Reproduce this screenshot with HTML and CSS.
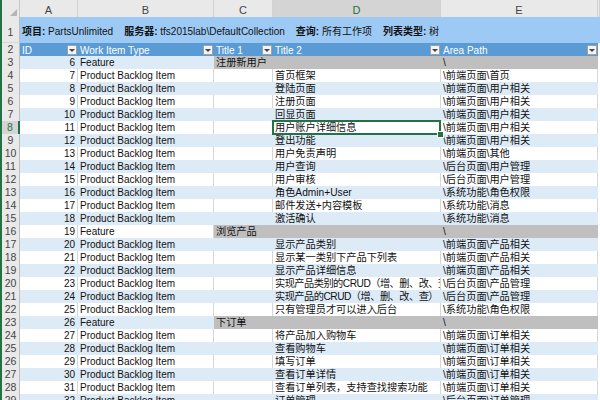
FILE: index.html
```html
<!DOCTYPE html>
<html lang="zh-CN">
<head>
<meta charset="utf-8">
<title>Sheet</title>
<link rel="stylesheet" href="styles.css">
</head>
<body>
<div class="sheet">
  <div class="row colhdr">
    <span class="corner"></span><span class="ch">A</span><span class="ch">B</span><span class="ch">C</span><span class="ch csel">D</span><span class="ch">E</span><span class="ch"></span>
  </div>
  <div class="row r1">
    <span class="rh">1</span>
    <div class="info"><span><b>项目:</b> PartsUnlimited</span><span><b>服务器:</b> tfs2015lab\DefaultCollection</span><span><b>查询:</b> 所有工作项</span><span><b>列表类型:</b> 树</span></div>
  </div>
  <div class="row r2">
    <span class="rh">2</span>
    <span class="th">ID<i class="fb"></i></span>
    <span class="th">Work Item Type<i class="fb"></i></span>
    <span class="th">Title 1<i class="fb"></i></span>
    <span class="th">Title 2<i class="fb"></i></span>
    <span class="th">Area Path<i class="fb"></i></span>
    <span class="x"></span>
  </div>
  <div class="row b"><span class="rh">3</span><span class="c n">6</span><span class="c">Feature</span><span class="c z g">注册新用户</span><span class="c g"></span><span class="c z g">\</span><span class="x"></span></div>
  <div class="row w"><span class="rh">4</span><span class="c n">7</span><span class="c">Product Backlog Item</span><span class="c"></span><span class="c z">首页框架</span><span class="c z">\前端页面\首页</span><span class="x"></span></div>
  <div class="row b"><span class="rh">5</span><span class="c n">8</span><span class="c">Product Backlog Item</span><span class="c"></span><span class="c z">登陆页面</span><span class="c z">\前端页面\用户相关</span><span class="x"></span></div>
  <div class="row w"><span class="rh">6</span><span class="c n">9</span><span class="c">Product Backlog Item</span><span class="c"></span><span class="c z">注册页面</span><span class="c z">\前端页面\用户相关</span><span class="x"></span></div>
  <div class="row b"><span class="rh">7</span><span class="c n">10</span><span class="c">Product Backlog Item</span><span class="c"></span><span class="c z">回显页面</span><span class="c z">\前端页面\用户相关</span><span class="x"></span></div>
  <div class="row w"><span class="rh rsel">8</span><span class="c n">11</span><span class="c">Product Backlog Item</span><span class="c"></span><span class="c z sel">用户账户详细信息</span><span class="c z">\前端页面\用户相关</span><span class="x"></span></div>
  <div class="row b"><span class="rh">9</span><span class="c n">12</span><span class="c">Product Backlog Item</span><span class="c"></span><span class="c z">登出功能</span><span class="c z">\前端页面\用户相关</span><span class="x"></span></div>
  <div class="row w"><span class="rh">10</span><span class="c n">13</span><span class="c">Product Backlog Item</span><span class="c"></span><span class="c z">用户免责声明</span><span class="c z">\前端页面\其他</span><span class="x"></span></div>
  <div class="row b"><span class="rh">11</span><span class="c n">14</span><span class="c">Product Backlog Item</span><span class="c"></span><span class="c z">用户查询</span><span class="c z">\后台页面\用户管理</span><span class="x"></span></div>
  <div class="row w"><span class="rh">12</span><span class="c n">15</span><span class="c">Product Backlog Item</span><span class="c"></span><span class="c z">用户审核</span><span class="c z">\后台页面\用户管理</span><span class="x"></span></div>
  <div class="row b"><span class="rh">13</span><span class="c n">16</span><span class="c">Product Backlog Item</span><span class="c"></span><span class="c z">角色Admin+User</span><span class="c z">\系统功能\角色权限</span><span class="x"></span></div>
  <div class="row w"><span class="rh">14</span><span class="c n">17</span><span class="c">Product Backlog Item</span><span class="c"></span><span class="c z">邮件发送+内容模板</span><span class="c z">\系统功能\消息</span><span class="x"></span></div>
  <div class="row b"><span class="rh">15</span><span class="c n">18</span><span class="c">Product Backlog Item</span><span class="c"></span><span class="c z">激活确认</span><span class="c z">\系统功能\消息</span><span class="x"></span></div>
  <div class="row w"><span class="rh">16</span><span class="c n">19</span><span class="c">Feature</span><span class="c z g">浏览产品</span><span class="c g"></span><span class="c z g">\</span><span class="x"></span></div>
  <div class="row b"><span class="rh">17</span><span class="c n">20</span><span class="c">Product Backlog Item</span><span class="c"></span><span class="c z">显示产品类别</span><span class="c z">\前端页面\产品相关</span><span class="x"></span></div>
  <div class="row w"><span class="rh">18</span><span class="c n">21</span><span class="c">Product Backlog Item</span><span class="c"></span><span class="c z">显示某一类别下产品下列表</span><span class="c z">\前端页面\产品相关</span><span class="x"></span></div>
  <div class="row b"><span class="rh">19</span><span class="c n">22</span><span class="c">Product Backlog Item</span><span class="c"></span><span class="c z">显示产品详细信息</span><span class="c z">\前端页面\产品相关</span><span class="x"></span></div>
  <div class="row w"><span class="rh">20</span><span class="c n">23</span><span class="c">Product Backlog Item</span><span class="c"></span><span class="c z tight">实现产品类别的CRUD（增、删、改、查）</span><span class="c z">\后台页面\产品管理</span><span class="x"></span></div>
  <div class="row b"><span class="rh">21</span><span class="c n">24</span><span class="c">Product Backlog Item</span><span class="c"></span><span class="c z tight">实现产品的CRUD（增、删、改、查）</span><span class="c z">\后台页面\产品管理</span><span class="x"></span></div>
  <div class="row w"><span class="rh">22</span><span class="c n">25</span><span class="c">Product Backlog Item</span><span class="c"></span><span class="c z">只有管理员才可以进入后台</span><span class="c z">\系统功能\角色权限</span><span class="x"></span></div>
  <div class="row b"><span class="rh">23</span><span class="c n">26</span><span class="c">Feature</span><span class="c z g">下订单</span><span class="c g"></span><span class="c z g">\</span><span class="x"></span></div>
  <div class="row w"><span class="rh">24</span><span class="c n">27</span><span class="c">Product Backlog Item</span><span class="c"></span><span class="c z">将产品加入购物车</span><span class="c z">\前端页面\订单相关</span><span class="x"></span></div>
  <div class="row b"><span class="rh">25</span><span class="c n">28</span><span class="c">Product Backlog Item</span><span class="c"></span><span class="c z">查看购物车</span><span class="c z">\前端页面\订单相关</span><span class="x"></span></div>
  <div class="row w"><span class="rh">26</span><span class="c n">29</span><span class="c">Product Backlog Item</span><span class="c"></span><span class="c z">填写订单</span><span class="c z">\前端页面\订单相关</span><span class="x"></span></div>
  <div class="row b"><span class="rh">27</span><span class="c n">30</span><span class="c">Product Backlog Item</span><span class="c"></span><span class="c z">查看订单详情</span><span class="c z">\前端页面\订单相关</span><span class="x"></span></div>
  <div class="row w"><span class="rh">28</span><span class="c n">31</span><span class="c">Product Backlog Item</span><span class="c"></span><span class="c z">查看订单列表，支持查找搜索功能</span><span class="c z">\前端页面\订单相关</span><span class="x"></span></div>
  <div class="row b"><span class="rh">29</span><span class="c n">32</span><span class="c">Product Backlog Item</span><span class="c"></span><span class="c z">订单管理</span><span class="c z">\后台页面\订单管理</span><span class="x"></span></div>
</div>
</body>
</html>
```

FILE: styles.css
```css
* { box-sizing: border-box; margin: 0; padding: 0; }
html, body { width: 600px; height: 400px; overflow: hidden; background: #fff; }
body {
  font-family: "Liberation Sans", "Noto Sans CJK SC", sans-serif;
  font-size: 10px;
  color: #111;
}
.sheet {
  display: flex;
  flex-direction: column;
  width: 600px;
  height: 400px;
  overflow: hidden;
  border-left: 2px solid #217346;
}
.row {
  flex: none;
  display: grid;
  grid-template-columns: 18px 58px 136px 59px 168px 157px 1fr;
  height: 13px;
}
.colhdr { height: 17px; }
.corner {
  display: flex;
  justify-content: flex-end;
  align-items: flex-end;
  padding: 0 2px 2px 0;
  background: #e9e9e9;
  border-right: 1px solid #c8c8c8;
  border-bottom: 1px solid #bdbdbd;
}
.corner::after {
  content: "";
  border-left: 7px solid transparent;
  border-bottom: 7px solid #b5b5b5;
}
.ch {
  background: #e9e9e9;
  color: #444;
  text-align: center;
  font-size: 11px;
  line-height: 13px;
  padding-top: 4px;
  border-right: 1px solid #d2d2d2;
  border-bottom: 1px solid #bdbdbd;
}
.csel {
  background: #d4d4d4;
  color: #217346;
  border-bottom: 2px solid #217346;
}
.rh {
  background: #e9e9e9;
  color: #444;
  text-align: center;
  font-size: 10.5px;
  line-height: 13px;
  border-right: 1px solid #bdbdbd;
  border-bottom: 1px solid #d6d6d6;
}
.rsel {
  background: #d4d4d4;
  color: #217346;
  border-right: 2px solid #217346;
}
.r1 { height: 26px; }
.r1 .rh { padding-top: 9px; }
.info {
  grid-column: 2 / -1;
  display: flex;
  gap: 11px;
  padding: 8px 0 0 2px;
  line-height: 13px;
  background: #9dcaf5;
  white-space: nowrap;
  color: #111;
}
.info b { font-weight: bold; }
.th {
  display: flex;
  align-items: center;
  justify-content: space-between;
  padding: 0 1px 0 2px;
  line-height: 13px;
  background: #5b9bd5;
  color: #fff;
  white-space: nowrap;
}
.fb {
  display: flex;
  align-items: center;
  justify-content: center;
  width: 10px;
  height: 10px;
  background: #f4f4f4;
  border: 1px solid #a0a0a0;
}
.fb::after {
  content: "";
  border-left: 3px solid transparent;
  border-right: 3px solid transparent;
  border-top: 3px solid #444;
}
.c {
  padding: 0 0 0 2px;
  line-height: 13px;
  white-space: nowrap;
  overflow: hidden;
  background: #fff;
  border-right: 1px solid #d6d6d6;
  border-bottom: 1px solid #a6c9ea;
}
.b .c { background: #ddebf7; border-right-color: #ddebf7; }
.row .g { background: #bfbfbf; border-right-color: #bfbfbf; }
.n { text-align: right; padding: 0 2px 0 0; }
.z { font-size: 10.2px; }
.tight { letter-spacing: -0.5px; }
.x { background: #fff; }
.sel {
  position: relative;
  overflow: visible;
  z-index: 1;
}
.sel::before {
  content: "";
  position: absolute;
  left: -1px;
  top: -1px;
  right: -1px;
  bottom: -1px;
  border: 2px solid #217346;
}
.sel::after {
  content: "";
  position: absolute;
  right: -3px;
  bottom: -3px;
  width: 5px;
  height: 5px;
  background: #217346;
  box-shadow: 0 0 0 1px #fff;
}
```
